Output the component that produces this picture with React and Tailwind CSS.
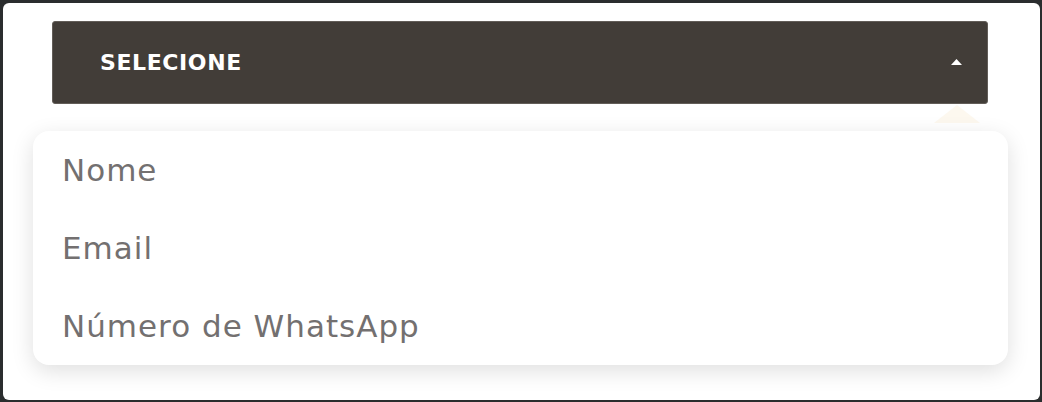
import React from 'react';

const options = ['Nome', 'Email', 'Número de WhatsApp'];

export default function App() {
  return (
    <div className="w-[1042px] h-[402px] bg-[#2a2d2e] pt-[3px] pl-[3px] pr-[2px] pb-[2px]">
      <div className="relative h-full bg-white rounded-[6px] pt-[18px] pl-[49px] pr-[52px]">
        <button
          type="button"
          className="w-full h-[83px] flex items-center justify-between bg-[#423d38] border border-[#625d58] rounded-[3px] pl-[47px] pr-[25px] text-white"
          style={{ fontFamily: '"DejaVu Sans", sans-serif' }}
        >
          <span className="text-[22px] font-bold tracking-[0.6px]">SELECIONE</span>
          <svg width="11" height="6" viewBox="0 0 11 6" className="mb-[2px]">
            <path d="M5.5 0 L11 6 L0 6 Z" fill="#ffffff" />
          </svg>
        </button>

        <svg
          width="46"
          height="18"
          viewBox="0 0 46 18"
          className="absolute left-[931px] top-[102px]"
        >
          <path d="M23 0 L46 18 L0 18 Z" fill="#fdf8ef" />
        </svg>

        <ul
          className="relative mt-[27px] -ml-[19px] -mr-[20px] bg-white rounded-[16px] shadow-[0_6px_22px_rgba(0,0,0,0.13)]"
          style={{ fontFamily: '"DejaVu Sans", sans-serif' }}
        >
          {options.map((opt) => (
            <li
              key={opt}
              className="h-[78px] flex items-center pl-[29px] text-[31px] tracking-[1px] text-[#737070]"
            >
              {opt}
            </li>
          ))}
        </ul>
      </div>
    </div>
  );
}
